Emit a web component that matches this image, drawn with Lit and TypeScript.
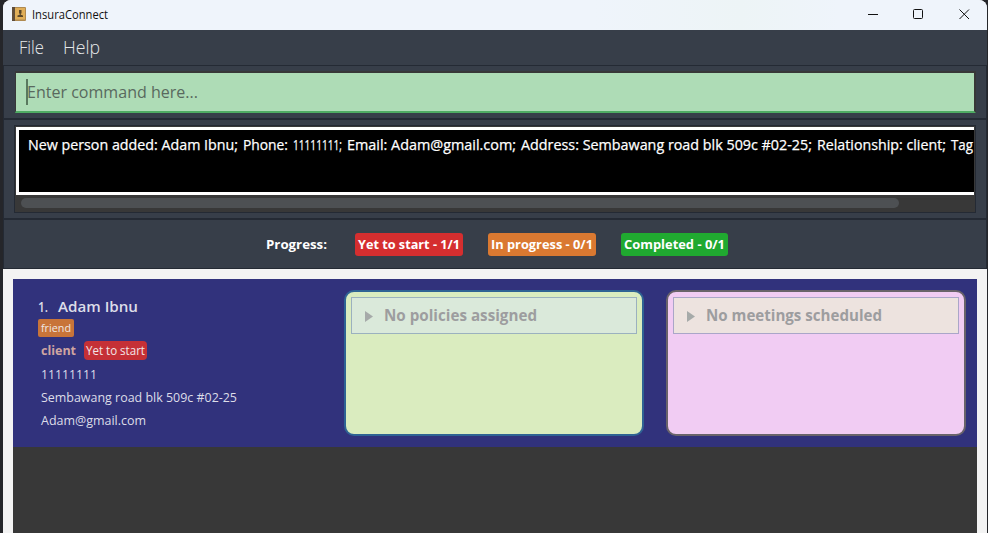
import { LitElement, html, css } from "lit";
import { customElement, property } from "lit/decorators.js";

/** A single line of text set to a fixed measure; ascent is the distance from the box top to the baseline. */
@customElement("text-run")
class TextRun extends LitElement {
  @property() text = "";
  @property({ type: Number }) width = 100;
  @property({ type: Number }) ascent = 14;
  @property({ type: Number }) height = 18;
  static styles = css`
    :host { display: block; flex: none; }
    svg { display: block; overflow: visible; }
    text { fill: currentColor; white-space: pre; stroke: currentColor; stroke-width: var(--text-stroke, 0); }
  `;
  render() {
    return html`<svg width=${this.width} height=${this.height}>
      <text x="0" y=${this.ascent} textLength=${this.width} lengthAdjust="spacingAndGlyphs">${this.text}</text>
    </svg>`;
  }
}

const run = (text: string, width: number, ascent: number, height: number, cls = "") =>
  html`<text-run class=${cls} .text=${text} .width=${width} .ascent=${ascent} .height=${height}></text-run>`;

const RESULT: [string, number][] = [
  ["New person added: Adam Ibnu;", 210],
  ["Phone:", 45],
  ["11111111;", 49],
  ["Email: Adam@gmail.com;", 169],
  ["Address: Sembawang road blk 509c #02-25;", 291],
  ["Relationship: client;", 129],
  ["Tag", 22],
];

@customElement("app-root")
class AppRoot extends LitElement {
  static styles = css`
    :host {
      display: block; width: 988px; height: 533px; overflow: hidden;
      background: #25262a; box-sizing: border-box; padding: 0 1px 0 3px;
      font-family: "Open Sans", "Noto Sans", sans-serif;
    }
    * { box-sizing: border-box; }
    .window { height: 533px; display: flex; flex-direction: column; background: #f3f3f3;
      border-radius: 8px 8px 0 0; overflow: hidden; }
    .titlebar { height: 30px; flex: none; display: flex; background: linear-gradient(90deg, #eff4fb, #eff4fb 60%, #edf4f6 75%, #eff4fb 85%); padding: 7px 17px 0 9px; color: #111; }
    .logo { width: 14px; height: 14px; flex: none; margin-right: 6px; }
    .title { font-size: 12px; }
    .controls { margin-left: auto; display: flex; gap: 35px; padding-top: 2px; }
    .controls svg { width: 11px; height: 11px; fill: none; stroke: #111; stroke-width: 1; }
    .controls .min { margin-right: -1px; }
    .menu { height: 35px; flex: none; background: #373e49; display: flex; gap: 19px; padding: 6px 0 0 16px;
      color: #e6e8ea; font-size: 18px; font-weight: 300; }
    .pane { flex: none; background: #373e49; border: 1px solid #242a34; }
    .command { height: 54px; padding: 5px 10px 0 11px; }
    .input { height: 42px; width: 961px; background: #aedcb6; border: solid #383838; border-width: 2px 2px 2px 1px;
      border-bottom-color: #4fab63;
      display: flex; padding: 6px 0 0 10px; color: #59695e; font-size: 16.5px; }
    .caret { width: 2px; height: 26px; background: #59795f; margin-right: -1px; }
    .result { height: 100px; padding: 5px 10px; }
    .scroller { width: 962px; height: 88px; border: 1px solid #242a34; background: #383838; padding: 1px; display: flex; flex-direction: column; }
    .output { width: 958px; height: 68px; background: #000; border: 3px solid #fff; border-right: 0;
      color: #fff; font-size: 15px; font-weight: 500; padding: 6px 0 0 9px; display: flex; gap: 5px; --text-stroke: .25px; }
    .thumb { width: 878px; height: 10px; border-radius: 5px; background: #4d5053; margin: 3px 0 0 5px; }
    .progress { height: 50px; display: flex; padding: 13px 0 0 262px; color: #fff; font-size: 13px; font-weight: 700; }
    .chip { height: 23px; border-radius: 3px; padding: 0 3px; margin-right: 25px; }
    .progress .lead { margin-right: 28px; }
    .red { background: #d52e2f; } .orange { background: #da7931; } .green { background: #20a930; }
    .list { flex: 1; margin: 10px 10px 0; background: #383838; }
    .card { height: 168px; background: #31327c; display: flex; padding: 11px 11px 0 25px; color: #dddde8; font-size: 13px; }
    .details { width: 306px; display: flex; flex-direction: column; padding-top: 5px; }
    .name { display: flex; gap: 10px; height: 24px; font-size: 15px; font-weight: 600; }
    .tag { width: 36px; height: 18px; border-radius: 2px; background: #c87439; padding-left: 3px; font-size: 11px; color: #f0e8e4; }
    .relation { height: 23px; display: flex; gap: 8px; padding: 4px 0 0 3px; }
    .kind { color: #cfa5a1; font-weight: 700; }
    .status { width: 63px; height: 19px; border-radius: 4px; background: #c53036; padding-left: 2px; font-size: 11.7px; color: #f2e5e8; }
    .row { padding-left: 3px; height: 23px; }
    .panel { width: 300px; height: 146px; border-radius: 10px; padding: 5px; border: 2px solid #2f6394; background: #daecbf;
      margin-right: 22px; flex: none; }
    .meetings { border-color: #69636a; background: #f1ccf3; margin-right: 0; }
    .head { height: 37px; border: 1px solid #9bb1bf; background: #dae9da; display: flex; padding: 7px 0 0 13px; color: #9d9d9f; font-size: 15.5px; font-weight: 700; }
    .meetings .head { border-color: #aaa6c8; background: #ede3df; }
    .arrow { width: 8px; height: 11px; margin: 6px 11px 0 0; fill: #a6aaa9; flex: none; }
  `;

  panel(kind: string, text: string, width: number) {
    return html`<div class="panel ${kind}"><div class="head">
      <svg class="arrow" viewBox="0 0 8 11"><path d="M0 0L8 5.5L0 11Z" /></svg>${run(text, width, 16, 22)}
    </div></div>`;
  }

  render() {
    return html`<div class="window">
      <div class="titlebar">
        <svg class="logo" viewBox="0 0 14 14">
          <rect width="14" height="14" rx="1" fill="#b08a50" /><rect width="3" height="14" fill="#5f4d3a" />
          <rect x="3" y="1" width="10" height="11.500" fill="#e0ae58" />
          <path d="M7 3h2.500v3.500h-.7v1.200l2.200.8V10H5.500V8.500l2.200-.8V6.500H7z" fill="#594628" />
        </svg>
        ${run("InsuraConnect", 76, 12, 16, "title")}
        <div class="controls">
          <svg class="min" viewBox="0 0 11 11"><path d="M0 5.500h10" /></svg>
          <svg viewBox="0 0 11 11"><rect x=".5" y=".5" width="9" height="9" rx="1" /></svg>
          <svg viewBox="0 0 11 11"><path d="M.5 .5l9.500 9.500M10 .5L.5 10" /></svg>
        </div>
      </div>
      <div class="menu">${run("File", 25, 18, 24)}${run("Help", 37, 18, 24)}</div>
      <div class="pane command"><div class="input"><div class="caret"></div>${run("Enter command here...", 171, 19, 24)}</div></div>
      <div class="pane result"><div class="scroller">
        <div class="output">${RESULT.map(([text, width]) => run(text, width, 14, 20))}</div>
        <div class="thumb"></div>
      </div></div>
      <div class="pane progress">
        ${run("Progress:", 61, 16, 22, "lead")}
        <div class="chip red">${run("Yet to start - 1/1", 102, 16, 22)}</div>
        <div class="chip orange">${run("In progress - 0/1", 102, 16, 22)}</div>
        <div class="chip green">${run("Completed - 0/1", 101, 16, 22)}</div>
      </div>
      <div class="list"><div class="card">
        <div class="details">
          <div class="name">${run("1.", 10, 17, 22)}${run("Adam Ibnu", 80, 17, 22)}</div>
          <div class="tag">${run("friend", 30, 13, 17)}</div>
          <div class="relation">${run("client", 35, 14, 18, "kind")}<div class="status">${run("Yet to start", 59, 14, 18)}</div></div>
          <div class="row">${run("11111111", 56, 19, 23)}</div>
          <div class="row">${run("Sembawang road blk 509c #02-25", 196, 19, 23)}</div>
          <div class="row">${run("Adam@gmail.com", 105, 19, 23)}</div>
        </div>
        ${this.panel("policies", "No policies assigned", 153)}
        ${this.panel("meetings", "No meetings scheduled", 176)}
      </div></div>
    </div>`;
  }
}
